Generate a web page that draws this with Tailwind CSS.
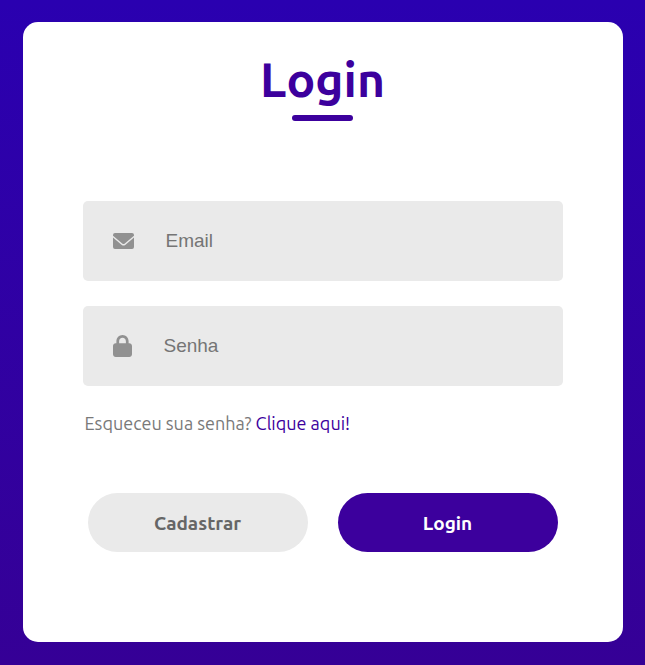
<!DOCTYPE html>
<html lang="pt-BR"><head><meta charset="utf-8"><title>Login</title>
<script src="https://cdn.jsdelivr.net/npm/@tailwindcss/browser@4"></script></head>
<body class="h-[665px] overflow-hidden bg-linear-to-b from-[#2a00b0] to-[#350096] pt-[22px] pl-[22.5px] font-['Ubuntu','Noto_Sans',sans-serif]">
<main class="flex h-[620px] w-[600px] flex-col items-center rounded-[15px] bg-white">
<h1 class="mt-[25px] h-[68px] text-[48px] leading-[64px] font-semibold text-[#3c009d]">Login</h1>
<div class="h-[6px] w-[61px] rounded-full bg-[#3c009d]"></div>
<form class="mt-[80px] flex w-[480px] flex-col">
<label class="flex h-[80px] items-center rounded-[5px] bg-[#eaeaea] pl-[30px]">
<svg class="h-[16px] w-[21px] fill-[#919191]" viewBox="0 0 21 16"><path d="M2 0H19Q21 0 21 2V2.700L11.500 10.700Q10.500 11.400 9.500 10.700L0 2.700V2Q0 0 2 0ZM0 4.400L8.800 11.900Q10.500 13.100 12.200 11.900L21 4.400V14Q21 16 19 16H2Q0 16 0 14Z"/></svg>
<input class="ml-[32px] w-[380px] font-['Liberation_Sans',sans-serif] text-[19px] outline-none placeholder:text-[#757575]" type="email" placeholder="Email"></label>
<label class="mt-[25px] flex h-[80px] items-center rounded-[5px] bg-[#eaeaea] pl-[30px]">
<svg class="h-[22px] w-[19px] fill-[#919191]" viewBox="0 0 448 512" preserveAspectRatio="none"><path d="M144 144v48H304V144c0-44.200-35.800-80-80-80s-80 35.800-80 80zM80 192V144C80 64.500 144.500 0 224 0s144 64.500 144 144v48h16c35.300 0 64 28.700 64 64V448c0 35.300-28.700 64-64 64H64c-35.300 0-64-28.700-64-64V256c0-35.300 28.700-64 64-64H80z"/></svg>
<input class="ml-[32px] w-[380px] font-['Liberation_Sans',sans-serif] text-[19px] outline-none placeholder:text-[#757575]" type="password" placeholder="Senha"></label>
<p class="mt-[23px] ml-[2px] h-[28px] text-[18px] leading-[28px] font-normal text-[#797979]">Esqueceu sua senha? <a class="text-[#3c009d]" href="#">Clique aqui!</a></p>
<div class="mt-[56px] flex justify-between px-[5px]">
<button type="button" class="h-[59px] w-[220px] rounded-full bg-[#eaeaea] pt-px text-[19px] font-semibold text-[#666]">Cadastrar</button>
<button type="button" class="h-[59px] w-[220px] rounded-full bg-[#3c009d] pt-px text-[19px] font-semibold text-white">Login</button>
</div></form></main></body></html>
